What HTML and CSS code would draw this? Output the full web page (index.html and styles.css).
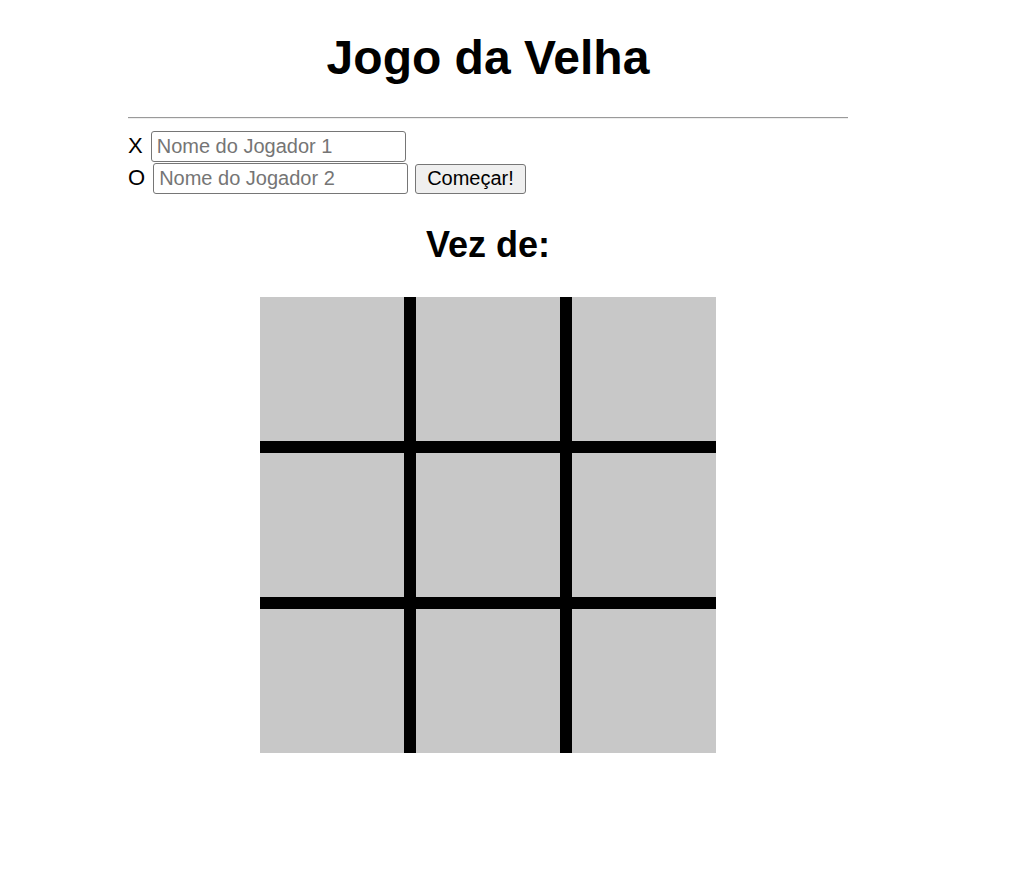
FILE: index.html
```html
<!DOCTYPE html>
<html lang="pt">
<head>
<meta charset="utf-8">
<title>Jogo da Velha</title>
<link rel="stylesheet" href="styles.css">
</head>
<body>
<div class="container">
  <h1 class="title">Jogo da Velha</h1>
  <hr class="divider">
  <div class="players">
    <div class="row">
      <span class="mark">X</span>
      <input class="name" type="text" placeholder="Nome do Jogador 1">
    </div>
    <div class="row">
      <span class="mark">O</span>
      <input class="name" type="text" placeholder="Nome do Jogador 2">
      <button class="start" type="button">Começar!</button>
    </div>
  </div>
  <h2 class="turn">Vez de:</h2>
  <div class="board">
    <div class="cell"></div><div class="cell"></div><div class="cell"></div>
    <div class="cell"></div><div class="cell"></div><div class="cell"></div>
    <div class="cell"></div><div class="cell"></div><div class="cell"></div>
  </div>
</div>
</body>
</html>
```

FILE: styles.css
```css
html, body {
  margin: 0;
  padding: 0;
  background: #ffffff;
}
body {
  padding: 8px;
  font-family: "Liberation Sans", Arial, sans-serif;
  color: #000;
}
.container {
  width: 720px;
  margin-left: 120px;
}
.title {
  margin: 22px 0 0;
  font-size: 48px;
  line-height: 56px;
  font-weight: bold;
  text-align: center;
}
.divider {
  margin: 31px 0 0;
  height: 0;
  border: none;
  border-top: 1px solid #9a9a9a;
  border-bottom: 1px solid #eeeeee;
}
.players {
  margin-top: 11px;
  display: flex;
  flex-direction: column;
}
.row {
  display: flex;
  align-items: center;
  height: 32px;
}
.mark {
  font-size: 22px;
  line-height: 24px;
  margin-right: 8px;
}
.name {
  box-sizing: border-box;
  width: 255px;
  height: 31px;
  margin: 0;
  padding: 1px 5px;
  font-family: "Liberation Sans", Arial, sans-serif;
  font-size: 20px;
  border: 1px solid #767676;
  border-radius: 3px;
  background: #fff;
}
.name::placeholder {
  color: #757575;
}
.start {
  box-sizing: border-box;
  height: 30px;
  margin: 1px 0 0 7px;
  padding: 0 11px;
  font-family: "Liberation Sans", Arial, sans-serif;
  font-size: 20px;
  color: #000;
  background: #efefef;
  border: 1px solid #767676;
  border-radius: 3px;
}
.turn {
  margin: 30px 0 0;
  font-size: 36px;
  line-height: 42px;
  font-weight: bold;
  text-align: center;
}
.board {
  margin: 31px auto 0;
  width: 456px;
  display: grid;
  grid-template-columns: repeat(3, 144px);
  grid-template-rows: repeat(3, 144px);
  gap: 12px;
  background: #000;
}
.cell {
  background: #c8c8c8;
}
```
